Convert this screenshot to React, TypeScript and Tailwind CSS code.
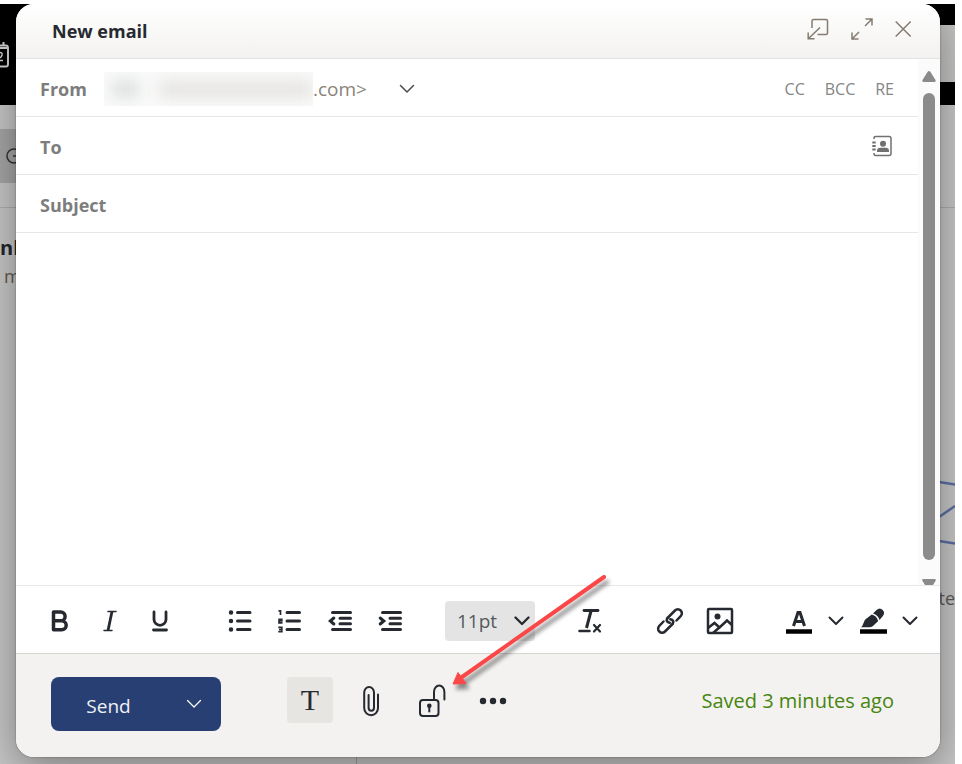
import { useState } from "react";
import type { ReactNode } from "react";

function Chevron({ width = 16, strokeWidth = 2 }: { width?: number; strokeWidth?: number }) {
  return (
    <svg
      width={width}
      height={width}
      viewBox="0 0 16 16"
      fill="none"
      stroke="currentColor"
      strokeWidth={strokeWidth}
      strokeLinecap="round"
      strokeLinejoin="round"
      aria-hidden
    >
      <path d="M1.500 4.500 8 11l6.500-6.500" />
    </svg>
  );
}

function ToolButton({ label, children }: { label: string; children: ReactNode }) {
  return (
    <button
      type="button"
      aria-label={label}
      className="flex h-10 w-[30px] shrink-0 items-center justify-center"
    >
      {children}
    </button>
  );
}

function FooterButton({
  label,
  active,
  children,
}: {
  label: string;
  active?: boolean;
  children: ReactNode;
}) {
  return (
    <button
      type="button"
      aria-label={label}
      className={
        active
          ? "flex h-[46px] w-[46px] shrink-0 items-center justify-center rounded bg-[#e6e5e2]"
          : "flex h-[46px] w-[46px] shrink-0 items-center justify-center rounded pt-[2px]"
      }
    >
      {children}
    </button>
  );
}

// Mailbox page that stays dimmed behind the compose window
function MailboxBackdrop() {
  return (
    <div className="flex min-h-[760px] flex-1 flex-col bg-[#c6c6c6]" aria-hidden>
      <div className="flex h-[101px] justify-between bg-black">
        <svg className="mt-[37px]" width="9" height="28" viewBox="0 0 9 28" fill="none" stroke="#d4d4d4">
          <path d="M0 4.500h6Q8 4.500 8 7v16q0 2.500-2 2.500H0" strokeWidth="2" />
          <path d="M0 7h8M3.500 1v4" strokeWidth="2" />
          <path d="M0 11.500q2.500 0 2 2.500-.5 2-2 3M0 19.500h3" strokeWidth="1.500" />
        </svg>
        <div className="mt-[21px] h-[57px] w-[100px] bg-[#c4c4c2]" />
      </div>
      <div className="flex h-[103px] items-center border-b border-[#adadad]">
        <div className="flex h-[54px] w-40 items-center bg-[#a5a5a5] pl-[6px]">
          <svg width="16" height="16" viewBox="0 0 16 16" fill="none" stroke="#333" strokeWidth="1.500">
            <circle cx="8" cy="8" r="7" />
            <path d="M7 8h8" />
          </svg>
        </div>
      </div>
      <div className="flex flex-1">
        <div className="w-[357px] shrink-0 border-r border-[#a0a0a0] pt-[26px]">
          <p className="text-[20px]/7 font-bold text-[#22262c]">nb</p>
          <p className="pl-1 text-[18px]/7 text-[#5f5a50]">m</p>
        </div>
        <div className="flex flex-1 flex-col items-end pt-[268px]">
          <svg width="16" height="72" viewBox="0 0 16 72" fill="none" stroke="#5c6fa5" strokeWidth="2.500">
            <path d="M0 6l16 2.500M0 41l16-11M0 65l16 2.500" />
          </svg>
          <p className="mt-9 text-[18px]/7 text-[#5a5a5a]">tte</p>
        </div>
      </div>
    </div>
  );
}

function WindowHeader() {
  return (
    <header className="flex h-[55px] shrink-0 items-center justify-between border-b border-[#e4e3e1] bg-gradient-to-b from-white to-[#f3f2f0] pr-7 pl-9">
      <h1 className="text-[18px]/6 font-bold text-[#262a30]">New email</h1>
      <div className="flex items-center gap-[22px] pb-1 text-[#857b6e]">
        <button type="button" aria-label="Pop out">
          <svg width="22" height="22" viewBox="0 0 22 22" fill="none" stroke="currentColor" strokeWidth="1.500">
            <path d="M5 10V3q0-1.500 1.500-1.500h12.500q1.500 0 1.500 1.500v12q0 1.500-1.500 1.500h-8.500" />
            <path d="M1 21 13 9.500M1.200 14.500V20.800h6.300" />
          </svg>
        </button>
        <button type="button" aria-label="Expand">
          <svg width="22" height="22" viewBox="0 0 22 22" fill="none" stroke="currentColor" strokeWidth="1.500">
            <path d="M14 8l7-7M14.500 1H21v6.500M1 21l7-7M1 14.500V21h6.500" />
          </svg>
        </button>
        <button type="button" aria-label="Close" className="pr-px">
          <svg width="16" height="22" viewBox="0 0 16 22" fill="none" stroke="currentColor" strokeWidth="1.500">
            <path d="M.7 3.500l15 15M15.700 3.500l-15 15" />
          </svg>
        </button>
      </div>
    </header>
  );
}

function FromRow() {
  return (
    <div className="flex h-[58px] shrink-0 items-center border-b border-[#e6e6e6] px-6 pt-[2px]">
      <span className="w-16 text-[18px]/6 font-bold text-[#7d7d7d]">From</span>
      <button type="button" aria-label="Choose sender" className="flex items-center text-[#8a8377]">
        <span className="flex h-[34px] w-[209px] items-center overflow-hidden bg-[#fafafa]">
          <span className="ml-2 h-4 w-7 bg-[#d9dddd] blur-[8px]" />
          <span className="ml-5 h-4 w-40 bg-[#e3e2df] blur-[8px]" />
        </span>
        <span className="w-[86px] text-left text-[19px]/6">.com&gt;</span>
        <span className="text-[#4b4b4b]">
          <Chevron strokeWidth={1.5} />
        </span>
      </button>
      <div className="ml-auto flex gap-5 text-[16px]/6 text-[#858585]">
        <button type="button">CC</button>
        <button type="button">BCC</button>
        <button type="button">RE</button>
      </div>
    </div>
  );
}

function Scrollbar() {
  return (
    <div className="flex w-[22px] shrink-0 flex-col items-center bg-[#fbfbfb] pt-3" aria-hidden>
      <svg width="14" height="11" viewBox="0 0 14 11" fill="#8a8a8a">
        <path d="M5.500 1q1.500-1.800 3 0l5 8q.8 2-1.500 2H2Q-.3 11 .5 9z" />
      </svg>
      <div className="mt-[11px] w-3 flex-1 rounded-full bg-[#8b8b8b]" />
      <svg className="mt-[19px]" width="14" height="6" viewBox="0 0 14 6" fill="#8a8a8a">
        <path d="M1.500 0h11Q14.500 0 13.500 2l-2.500 4H3L.5 2Q-.5 0 1.500 0z" />
      </svg>
    </div>
  );
}

function FormatToolbar() {
  const [size, setSize] = useState("11pt");

  return (
    <div className="flex h-[67px] shrink-0 items-center gap-10 bg-white pt-[2px] pl-[29px] text-[#262a30]" role="toolbar">
      <div className="flex gap-5">
        <ToolButton label="Bold">
          <svg width="20" height="24" viewBox="0 0 20 24" fill="none" stroke="currentColor" strokeWidth="3.500" strokeLinejoin="round">
            <path d="M3.500 3h7.200a4.200 4.200 0 0 1 0 8.800H3.500zM3.500 11.800h8.200a4.500 4.500 0 0 1 0 9H3.500z" />
          </svg>
        </ToolButton>
        <ToolButton label="Italic">
          <svg width="16" height="24" viewBox="0 0 16 24" fill="none" stroke="currentColor">
            <path d="M10 2.500 6 21.500" strokeWidth="2.800" />
            <path d="M6 2.500h8M2 21.500h8" strokeWidth="1.500" strokeLinecap="round" />
          </svg>
        </ToolButton>
        <ToolButton label="Underline">
          <svg width="18" height="24" viewBox="0 0 18 24" fill="none" stroke="currentColor" strokeWidth="2.800" strokeLinecap="round">
            <path d="M3 3v7.500a6 5.800 0 0 0 12 0V3" />
            <path d="M2.500 21h13" />
          </svg>
        </ToolButton>
      </div>

      <div className="ml-[10px] flex gap-5">
        <ToolButton label="Bulleted list">
          <svg width="24" height="24" viewBox="0 0 24 24" fill="none" stroke="currentColor" strokeWidth="3" strokeLinecap="round">
            <path d="M9.500 3.500h12.500M9.500 12h12.500M9.500 20.500h12.500" />
            <path d="M3 3.500h0M3 12h0M3 20.500h0" strokeWidth="4.500" />
          </svg>
        </ToolButton>
        <ToolButton label="Numbered list">
          <svg width="24" height="24" viewBox="0 0 24 24" fill="none" stroke="currentColor">
            <path d="M9 3.500h12.500M9 12h12.500M9 20.500h12.500" strokeWidth="3" strokeLinecap="round" />
            <path d="M.5 1.800h2V6M.3 10.300h3.500V12H1v1.800h3.500M.3 18.300h3.500v4.400H.3M1 20.500h2.500" strokeWidth="1.700" />
          </svg>
        </ToolButton>
        <ToolButton label="Decrease indent">
          <svg width="24" height="24" viewBox="0 0 24 24" fill="none" stroke="currentColor" strokeWidth="3" strokeLinecap="round">
            <path d="M4.500 3.500h18M12 9.200h10.500M12 14.800h10.500M4.500 20.500h18M5.800 9 2.200 12l3.600 3" />
          </svg>
        </ToolButton>
        <ToolButton label="Increase indent">
          <svg width="24" height="24" viewBox="0 0 24 24" fill="none" stroke="currentColor" strokeWidth="3" strokeLinecap="round">
            <path d="M4.500 3.500h18M12 9.200h10.500M12 14.800h10.500M4.500 20.500h18M2.200 9l3.600 3-3.600 3" />
          </svg>
        </ToolButton>
      </div>

      <div className="relative">
        <select
          aria-label="Font size"
          value={size}
          onChange={(e) => setSize(e.target.value)}
          className="h-10 w-[90px] appearance-none rounded bg-[#e4e4e4] pl-3 text-[19px]/6 text-[#55595e]"
        >
          <option>10pt</option>
          <option>11pt</option>
          <option>12pt</option>
        </select>
        <span className="pointer-events-none absolute top-3 right-[5px]">
          <Chevron strokeWidth={2.3} />
        </span>
      </div>

      <ToolButton label="Clear formatting">
        <svg width="24" height="26" viewBox="0 0 24 26" fill="none" stroke="currentColor" strokeLinecap="round">
          <path d="M6 2.500h14" strokeWidth="2.800" />
          <path d="M13 3 8.500 20" strokeWidth="3" strokeLinecap="butt" />
          <path d="M1.500 23h10" strokeWidth="2.500" />
          <path d="M16 17l6 6.500M22 17l-6 6.500" strokeWidth="2.200" />
        </svg>
      </ToolButton>

      <div className="ml-[10px] flex gap-5">
        <ToolButton label="Insert link">
          <svg width="28" height="28" viewBox="0 0 28 28" fill="none" stroke="currentColor" strokeWidth="2.500" strokeLinecap="round">
            <path d="M11.500 11 19 3.500a4 4 0 0 1 5.700 5.700l-4.200 4.300M16.500 17 9 24.500a4 4 0 0 1-5.700-5.700l4.200-4.300" />
            <path d="M11.500 11q-1.800 2.500.5 4.200l1.700.6M16.500 17q1.800-2.500-.5-4.200l-1.700-.6" />
          </svg>
        </ToolButton>
        <ToolButton label="Insert image">
          <svg width="28" height="28" viewBox="0 0 28 28" fill="none" stroke="currentColor" strokeWidth="2.500">
            <rect x="2" y="2" width="24" height="24" rx="1" />
            <circle cx="11.500" cy="9.500" r="3" fill="currentColor" stroke="none" />
            <path d="M2 21l6.500-5 5 4.500 7.500-7 5 4.500M7 26l7-6" />
          </svg>
        </ToolButton>
      </div>

      <div className="ml-[10px] flex items-center gap-[15px]">
        <button type="button" aria-label="Text color" className="flex h-10 w-7 items-center justify-center">
          <svg width="28" height="28" viewBox="0 0 28 28" fill="none" stroke="currentColor" strokeWidth="3">
            <path d="M8.500 19 13 5.500h2L19.500 19M10.300 14.500h7.500" />
            <path d="M1 24.500h26" stroke="#000" strokeWidth="4.500" />
          </svg>
        </button>
        <button type="button" aria-label="Text color options">
          <Chevron strokeWidth={2} />
        </button>
        <button type="button" aria-label="Highlight" className="flex h-10 w-7 items-center justify-center">
          <svg width="28" height="28" viewBox="0 0 28 28" fill="currentColor">
            <path d="M14 6.500 17.500 3q3.400-3 6.200 0 2.800 3 0 6.200L20.500 13q-1.300-4.700-6.500-6.500z" />
            <path d="M12.800 7.600q5 1.500 6.400 6.400l-5.200 5q-1.500 1.300-4 1.300H2q1.500-1 2-3l1.500-3.500q.5-1.500 2-2.200z" />
            <path d="M1 22.200h27v4.600H1z" fill="#000" />
          </svg>
        </button>
        <button type="button" aria-label="Highlight options">
          <Chevron strokeWidth={2} />
        </button>
      </div>
    </div>
  );
}

function WindowFooter() {
  return (
    <footer className="flex h-[104px] shrink-0 items-start border-t border-[#d5d4d1] bg-[#f3f2f0] pt-[23px] pr-[46px] pl-[35px] text-[#262a30]">
      <div className="flex h-[54px] w-[170px] rounded-lg bg-[#273f73] text-white">
        <button type="submit" className="w-[115px] pt-1 text-[19px]/7 text-[#f0f2f7]">
          Send
        </button>
        <button type="button" aria-label="Send options" className="flex flex-1 items-center justify-center">
          <Chevron strokeWidth={1.2} />
        </button>
      </div>
      <div className="ml-[66px] flex gap-[15px]">
        <FooterButton label="Formatting" active>
          <span className="font-['Liberation_Serif',serif] text-[30px]/8">T</span>
        </FooterButton>
        <FooterButton label="Attach file">
          <svg width="18" height="32" viewBox="0 0 18 32" fill="none" stroke="currentColor" strokeWidth="2" strokeLinecap="round">
            <path d="M16 9.500V23a6.900 7.200 0 0 1-13.800 0V7.500a4.900 5.500 0 0 1 9.800 0V22.500a2.700 3.300 0 0 1-5.400 0V10" />
          </svg>
        </FooterButton>
        <FooterButton label="Encrypt">
          <svg width="28" height="34" viewBox="0 0 28 34" fill="none" stroke="currentColor" strokeWidth="2">
            <rect x="2" y="16" width="18.500" height="16" rx="3" />
            <path d="M16 16V8a5.200 6.500 0 0 1 10.400 0v7.500" strokeLinecap="round" />
            <circle cx="11.300" cy="21.800" r="2.300" fill="currentColor" stroke="none" />
            <path d="M11.300 22v6.300" />
          </svg>
        </FooterButton>
        <FooterButton label="More options">
          <svg width="28" height="8" viewBox="0 0 28 8" fill="currentColor">
            <circle cx="4" cy="4" r="3.200" />
            <circle cx="14" cy="4" r="3.200" />
            <circle cx="24" cy="4" r="3.200" />
          </svg>
        </FooterButton>
      </div>
      <p className="ml-auto pt-3 text-[20px]/6 text-[#47850f]">Saved 3 minutes ago</p>
    </footer>
  );
}

export default function App() {
  return (
    <div className="flex min-h-screen flex-col bg-white pt-1 pr-[7px] font-['Open_Sans','Noto_Sans',sans-serif]">
      <div className="relative flex flex-1 flex-col overflow-hidden">
        <MailboxBackdrop />

        <form
          role="dialog"
          aria-label="New email"
          onSubmit={(e) => e.preventDefault()}
          className="absolute inset-x-4 top-0 bottom-[7px] mr-[-1px] flex flex-col overflow-hidden rounded-[18px] bg-white shadow-[0_10px_40px_rgba(0,0,0,0.38),0_0_2px_rgba(0,0,0,0.4)]"
        >
          <WindowHeader />
          <div className="flex min-h-0 flex-1 border-b border-[#e8e8e8]">
            <div className="flex min-w-0 flex-1 flex-col">
              <FromRow />
              <div className="flex h-[58px] shrink-0 items-center border-b border-[#e6e6e6] px-6 pt-[2px]">
                <label htmlFor="to" className="text-[18px]/6 font-bold text-[#7d7d7d]">
                  To
                </label>
                <input id="to" className="mx-4 min-w-0 flex-1 text-[18px]/6 outline-none" />
                <button type="button" aria-label="Address book" className="pr-[2px] pb-[2px] text-[#707070]">
                  <svg width="20" height="22" viewBox="0 0 20 22" fill="none" stroke="currentColor" strokeWidth="1.500">
                    <path d="M2 4V3q0-1.500 1.500-1.500h13.500q2 0 2 2v15q0 2-2 2H3.500Q2 20.500 2 19v-1" />
                    <path d="M.3 7.500h3.400M.3 11h3.400M.3 14.500h3.400" strokeWidth="1.800" />
                    <circle cx="11" cy="8.800" r="3" fill="currentColor" stroke="none" />
                    <path d="M5 17v-1q0-3.200 3.200-3.200h5.600q3.200 0 3.200 3.200v1z" fill="currentColor" stroke="none" />
                  </svg>
                </button>
              </div>
              <div className="flex h-[58px] shrink-0 items-center border-b border-[#e6e6e6] px-6 pt-[2px]">
                <label htmlFor="subject" className="text-[18px]/6 font-bold text-[#7d7d7d]">
                  Subject
                </label>
                <input id="subject" className="ml-4 min-w-0 flex-1 text-[18px]/6 outline-none" />
              </div>
              <textarea
                aria-label="Message"
                className="min-h-0 flex-1 resize-none px-6 py-4 text-[18px]/6 outline-none"
              />
            </div>
            <Scrollbar />
          </div>
          <FormatToolbar />
          <WindowFooter />

          {/* Callout arrow pointing at the encrypt button */}
          <svg
            className="pointer-events-none absolute bottom-16 left-[432px] drop-shadow-[3px_5px_2px_rgba(0,0,0,0.45)]"
            width="164"
            height="124"
            viewBox="0 0 164 124"
            aria-hidden
          >
            <path d="M156 8 14 108" stroke="#fb4747" strokeWidth="4" strokeLinecap="round" />
            <path d="M5 115 10 103.500 18 114.500z" fill="#fb4747" stroke="#fb4747" />
          </svg>
        </form>
      </div>
    </div>
  );
}
